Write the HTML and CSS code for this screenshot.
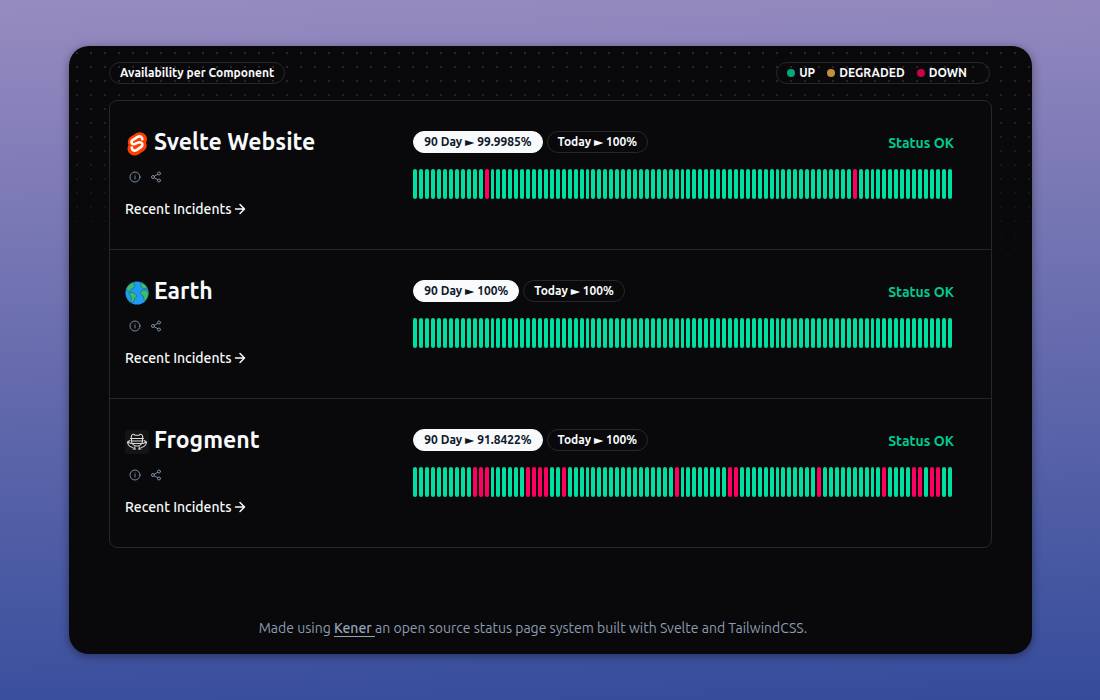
FILE: index.html
```html
<!DOCTYPE html>
<html lang="en">
<head>
<meta charset="utf-8">
<meta name="viewport" content="width=device-width, initial-scale=1">
<title>Status</title>
<link rel="stylesheet" href="styles.css">
</head>
<body>
<svg class="sprite" aria-hidden="true">
  <symbol id="info" viewBox="0 0 24 24"><circle cx="12" cy="12" r="10"/><path d="M12 16v-5M12 8h.01"/></symbol>
  <symbol id="share" viewBox="0 0 24 24"><circle cx="18" cy="5" r="3"/><circle cx="6" cy="12" r="3"/><circle cx="18" cy="19" r="3"/><path d="M8.6 13.5l6.8 4M15.4 6.5l-6.8 4"/></symbol>
  <symbol id="arrow" viewBox="0 0 24 24"><path d="M3 12h18M12 3l9 9-9 9"/></symbol>
</svg>
<div class="card">
  <header class="topbar">
    <h1 class="pill">Availability per Component</h1>
    <ul class="pill legend">
      <li><span class="dot up"></span>UP</li>
      <li><span class="dot degraded"></span>DEGRADED</li>
      <li><span class="dot down"></span>DOWN</li>
    </ul>
  </header>
  <main class="monitors">
    <section class="monitor">
      <div class="about">
        <h2 class="name">
          <svg class="logo" viewBox="0 0 24 24" aria-hidden="true"><path fill="#ff3e00" d="M20.7 3.3C18.500 .200 14.200-.7 11.100 1.300L5.700 4.700A6.200 6.200 0 0 0 2.900 8.900a6.500 6.500 0 0 0 .65 4.200 6.200 6.200 0 0 0-.93 2.300 6.600 6.600 0 0 0 1.130 5c2.200 3.100 6.500 4.100 9.600 2.100l5.400-3.500a6.200 6.200 0 0 0 2.800-4.150 6.500 6.500 0 0 0-.65-4.200 6.200 6.200 0 0 0 .93-2.300 6.600 6.600 0 0 0-1.130-5"/><path fill="none" stroke="#fff" stroke-width="2.600" stroke-linecap="round" stroke-linejoin="round" d="M17.300 7.300c0-2.600-2.400-3.600-4.700-2.400L8 7.800c-2.600 1.900-1.500 4.900 1.200 4.400 1.200-.3 4.200-2 5.400-2 2.900-.1 3.700 3 1.600 4.700l-4.700 3.200c-2.400 1.300-4.700.1-4.700-2.500"/></svg>
          Svelte Website
        </h2>
        <div class="tools">
          <button type="button" aria-label="About Svelte Website"><svg class="icon"><use href="#info"/></svg></button>
          <button type="button" aria-label="Share Svelte Website"><svg class="icon"><use href="#share"/></svg></button>
        </div>
        <a class="incidents" href="#">Recent Incidents<svg class="arrow" aria-hidden="true"><use href="#arrow"/></svg></a>
      </div>
      <div class="uptime">
        <div class="summary">
          <button type="button" class="pill active">90 Day ► 99.9985%</button>
          <button type="button" class="pill">Today ► 100%</button>
          <span class="status">Status OK</span>
        </div>
        <div class="bars" data-down="12,74"></div>
      </div>
    </section>
    <section class="monitor">
      <div class="about">
        <h2 class="name">
          <svg class="logo" viewBox="0 0 24 24" aria-hidden="true"><circle cx="12" cy="12" r="11.500" fill="#1e9bf8"/><g fill="#3dbb78" stroke="#14684a" stroke-width=".6" stroke-linejoin="round"><path d="M1.200 8C2.500 4.500 5.500 1.800 9.500 .900l-1 1.800 1.500 1.800-1 2-2.500 1.200L5 10l-1.500.5z"/><path d="M4 12l3-.8 4.500 2.600.3 1.700-2.300 2-.5 2.500-1.500 2L6 20l.3-3.500z"/><path d="M14.500 .9c3.500.8 6.500 3 8 6.600l-3 .2-2.500-.7-1.500-2 1-1.500z"/><path d="M16.500 9.500l4-.5 2.900 2c.2 3.500-1 6.500-3 8.500l-1.700-1.200-.2-3.300-2.500-1.500-.7-2z"/></g></svg>
          Earth
        </h2>
        <div class="tools">
          <button type="button" aria-label="About Earth"><svg class="icon"><use href="#info"/></svg></button>
          <button type="button" aria-label="Share Earth"><svg class="icon"><use href="#share"/></svg></button>
        </div>
        <a class="incidents" href="#">Recent Incidents<svg class="arrow" aria-hidden="true"><use href="#arrow"/></svg></a>
      </div>
      <div class="uptime">
        <div class="summary">
          <button type="button" class="pill active">90 Day ► 100%</button>
          <button type="button" class="pill">Today ► 100%</button>
          <span class="status">Status OK</span>
        </div>
        <div class="bars" data-down=""></div>
      </div>
    </section>
    <section class="monitor">
      <div class="about">
        <h2 class="name">
          <svg class="logo" viewBox="0 0 24 24" aria-hidden="true"><rect width="24" height="24" rx="3" fill="#141414"/><g fill="none" stroke="#dcdcdc" stroke-width="1.100" stroke-linecap="round" stroke-linejoin="round"><path d="M6.500 9.500C5.500 6.500 7 3.800 9 4.300l1.200 1h3.600l1.200-1c2-.5 3.500 2.200 2.500 5.200M5.500 8.500h13M6.500 11h11M7 13.500h10M6.500 9.500c-.5 4 2 6.500 5.500 6.500s6-2.500 5.500-6.500M5 10.500 2.500 12c.3 3 2.500 5 5.500 5.500M19 10.500l2.500 1.500c-.3 3-2.500 5-5.500 5.500M2.500 12l3.500 1.500M21.500 12 18 13.500M10 16l-.5 3M14 16l.5 3M8 19h2.500M13.500 19H16"/></g></svg>
          Frogment
        </h2>
        <div class="tools">
          <button type="button" aria-label="About Frogment"><svg class="icon"><use href="#info"/></svg></button>
          <button type="button" aria-label="Share Frogment"><svg class="icon"><use href="#share"/></svg></button>
        </div>
        <a class="incidents" href="#">Recent Incidents<svg class="arrow" aria-hidden="true"><use href="#arrow"/></svg></a>
      </div>
      <div class="uptime">
        <div class="summary">
          <button type="button" class="pill active">90 Day ► 91.8422%</button>
          <button type="button" class="pill">Today ► 100%</button>
          <span class="status">Status OK</span>
        </div>
        <div class="bars" data-down="10,11,12,19,20,21,22,25,44,53,54,68,79,84,85,87,88"></div>
      </div>
    </section>
  </main>
  <footer class="footer">Made using <a href="#">Kener </a>an open source status page system built with Svelte and TailwindCSS.</footer>
</div>
<script src="bars.js"></script>
</body>
</html>
```

FILE: styles.css
```css
* { box-sizing: border-box; }

body {
  margin: 0;
  min-height: 100vh;
  padding: 46px 68px 46px 69px;
  display: flex;
  background: linear-gradient(178deg, #978bc0 0%, #354c9b 100%);
  font-family: Ubuntu, "Noto Sans", "DejaVu Sans", sans-serif;
  font-size: 14px;
  line-height: 20px;
  color: #f8fafc;
}

h1, h2, ul { margin: 0; padding: 0; }
ul { list-style: none; }
a { color: inherit; text-decoration: none; }
button { font: inherit; color: inherit; background: none; border: 0; padding: 0; cursor: pointer; }

.sprite { position: absolute; width: 0; height: 0; }

.card {
  flex: 1;
  min-width: 0;
  display: flex;
  flex-direction: column;
  padding: 16px 40px;
  border-radius: 20px;
  background:
    linear-gradient(to bottom, rgba(9, 9, 11, 0) 0, #09090b 230px),
    radial-gradient(circle at 8px 7px, #33262c 0, #33262c 1px, transparent 1px) 0 0 / 14px 14px,
    #09090b;
  box-shadow: 0 2px 10px rgba(0, 0, 0, 0.4);
}

.topbar { display: flex; justify-content: space-between; padding-right: 2px; }

.pill {
  display: inline-flex;
  align-items: center;
  height: 22px;
  padding: 0 10px;
  border: 1px solid #27272a;
  border-radius: 11px;
  font-size: 12px;
  font-weight: 600;
  line-height: 20px;
  white-space: nowrap;
}
.pill.active { background: #f8fafc; border-color: #f8fafc; color: #0f172a; }

.legend { gap: 12px; padding-right: 22px; }
.legend li { display: flex; align-items: center; gap: 4px; }
.dot { width: 8px; height: 8px; border-radius: 50%; }
.dot.up { background: #00a97a; }
.dot.degraded { background: #c48f3c; }
.dot.down { background: #c60049; }

.monitors {
  margin-top: 16px;
  border: 1px solid #27272a;
  border-radius: 8px;
  background: #09090b;
}

.monitor {
  display: grid;
  grid-template-columns: 8fr 15fr;
  padding: 25px 37px 30px 15px;
}
.monitor + .monitor { border-top: 1px solid #27272a; }

.name {
  display: flex;
  align-items: center;
  gap: 5px;
  font-size: 23px;
  font-weight: 700;
  line-height: 32px;
}
.logo { width: 24px; height: 24px; margin-top: 4px; }

.tools { display: flex; gap: 9px; margin-top: 13px; padding-left: 4px; color: #7c8aa0; }
.tools button { display: flex; }
.icon { width: 12px; height: 12px; }
.icon, .arrow {
  fill: none;
  stroke: currentColor;
  stroke-width: 2;
  stroke-linecap: round;
  stroke-linejoin: round;
}

.incidents { display: inline-flex; align-items: center; gap: 2px; margin-top: 16px; font-weight: 500; }
.arrow { width: 12px; height: 12px; stroke-width: 3; }

.uptime { min-width: 0; padding-top: 5px; }
.summary { display: flex; gap: 4px; }
.status { margin: 2px 0 0 auto; color: #00c890; font-weight: 600; }

.bars { display: flex; gap: 2px; height: 30px; margin-top: 16px; padding-right: 2px; }
.bars span { flex: 1; border-radius: 2px; background: #00dfa2; }
.bars .down { background: #ff0060; }

.footer { margin-top: 70px; padding-right: 35px; text-align: center; color: #8d9bb0; }
.footer a { border-bottom: 1px solid #94a3b8; color: #94a3b8; font-weight: 500; }
```

FILE: bars.js
```js
const DAYS = 91;

document.querySelectorAll(".bars").forEach((bars) => {
  const down = new Set(bars.dataset.down.split(",").filter(Boolean).map(Number));
  for (let day = 0; day < DAYS; day++) {
    const bar = document.createElement("span");
    if (down.has(day)) bar.className = "down";
    bars.append(bar);
  }
});
```
